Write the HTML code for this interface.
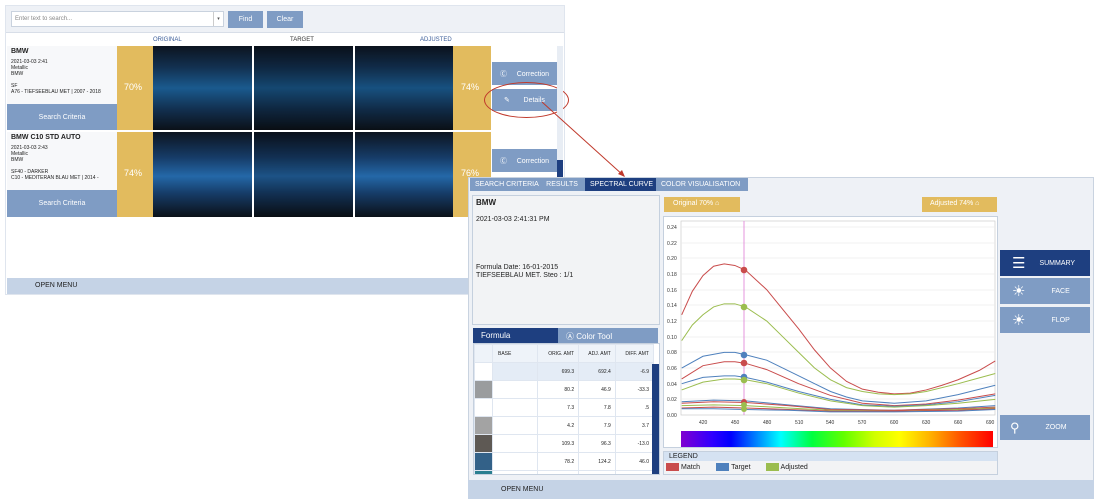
<!DOCTYPE html>
<html><head><meta charset="utf-8"><style>
*{box-sizing:border-box;margin:0;padding:0}
body{width:1094px;height:499px;background:#fff;font-family:"Liberation Sans",sans-serif;position:relative;overflow:hidden;color:#222}
.a{position:absolute;white-space:nowrap}
.btn{background:#7f9cc4;color:#fff;font-size:7px;display:flex;align-items:center;justify-content:center}
.gold{background:#e2bb5e}
.sw{background:linear-gradient(#0c1420 0%,#123050 25%,#1a5a8e 50%,#123050 75%,#0b1118 100%)}
.sw2{background:linear-gradient(#0c1420 0%,#163c68 30%,#2468a8 52%,#163c68 72%,#0b1118 100%)}
.card{background:#f7f8fa;font-size:5px;line-height:6px;padding:3px 4px}
.card b{font-size:7px;display:block;margin-bottom:4px}
td{border:1px solid #dfe6f0;font-size:5px;text-align:right;padding-right:4px;height:18px}
</style></head><body>
<div class="a" style="left:5px;top:5px;width:560px;height:290px;border:1px solid #dfe5ee;background:#fff"></div>
<div class="a" style="left:6px;top:6px;width:558px;height:27px;background:#eef1f6;border-bottom:1px solid #d8dee8"></div>
<div class="a" style="left:11px;top:11px;width:213px;height:16px;background:#fff;border:1px solid #c9d2de;font-size:6px;color:#888;padding:4px 3px">Enter text to search...</div>
<div class="a" style="left:213px;top:12px;width:10px;height:14px;border-left:1px solid #ccc;font-size:5px;color:#555;text-align:center;line-height:14px">▾</div>
<div class="a btn" style="left:228px;top:11px;width:35px;height:17px">Find</div>
<div class="a btn" style="left:267px;top:11px;width:36px;height:17px">Clear</div>
<div class="a" style="left:153px;top:37px;font-size:6px;color:#3a5c98">ORIGINAL</div>
<div class="a" style="left:290px;top:37px;font-size:6px;color:#333">TARGET</div>
<div class="a" style="left:420px;top:37px;font-size:6px;color:#3a5c98">ADJUSTED</div>
<div class="a card" style="left:7px;top:46px;width:110px;height:58px"><b>BMW</b>2021-03-03 2:41<br>Metallic<br>BMW<br><br>SF<br>A76 - TIEFSEEBLAU MET | 2007 - 2018</div>
<div class="a btn" style="left:7px;top:104px;width:110px;height:26px">Search Criteria</div>
<div class="a gold" style="left:117px;top:46px;width:36px;height:84px;color:#fff;font-size:9px;padding:36px 0 0 7px">70%</div>
<div class="a sw" style="left:153px;top:46px;width:99px;height:84px"></div>
<div class="a sw" style="left:254px;top:46px;width:99px;height:84px;filter:brightness(.8)"></div>
<div class="a sw" style="left:355px;top:46px;width:98px;height:84px;filter:brightness(.9)"></div>
<div class="a gold" style="left:453px;top:46px;width:38px;height:84px;color:#fff;font-size:9px;padding:36px 0 0 8px">74%</div>
<div class="a btn" style="left:492px;top:62px;width:65px;height:23px">Ⓒ &nbsp;&nbsp;&nbsp; Correction</div>
<div class="a btn" style="left:492px;top:89px;width:65px;height:22px">✎ &nbsp;&nbsp;&nbsp;&nbsp;&nbsp; Details</div>
<div class="a" style="left:484px;top:82px;width:85px;height:36px;border:1px solid #c0392b;border-radius:50%"></div>
<div class="a card" style="left:7px;top:132px;width:110px;height:58px"><b>BMW C10 STD AUTO</b>2021-03-03 2:43<br>Metallic<br>BMW<br><br>SF40 - DARKER<br>C10 - MEDITERAN BLAU MET | 2014 -</div>
<div class="a btn" style="left:7px;top:190px;width:110px;height:27px">Search Criteria</div>
<div class="a gold" style="left:117px;top:132px;width:36px;height:85px;color:#fff;font-size:9px;padding:36px 0 0 7px">74%</div>
<div class="a sw2" style="left:153px;top:132px;width:99px;height:85px"></div>
<div class="a sw2" style="left:254px;top:132px;width:99px;height:85px;filter:brightness(.8)"></div>
<div class="a sw2" style="left:355px;top:132px;width:98px;height:85px"></div>
<div class="a gold" style="left:453px;top:132px;width:38px;height:85px;color:#fff;font-size:9px;padding:36px 0 0 8px">76%</div>
<div class="a btn" style="left:492px;top:149px;width:65px;height:23px">Ⓒ &nbsp;&nbsp;&nbsp; Correction</div>
<div class="a" style="left:557px;top:46px;width:6px;height:171px;background:#e8edf4"></div>
<div class="a" style="left:557px;top:160px;width:6px;height:17px;background:#1e3f80"></div>
<div class="a" style="left:7px;top:278px;width:461px;height:16px;background:#c5d3e6;font-size:7px;padding:4px 0 0 28px">OPEN MENU</div>
<svg class="a" style="left:540px;top:100px" width="90" height="80"><line x1="2" y1="2" x2="84" y2="76" stroke="#c0392b" stroke-width="1"/><path d="M78 74 L85 77 L82 70Z" fill="#c0392b"/></svg>
<div class="a" style="left:468px;top:177px;width:626px;height:322px;background:#eef1f6;border:1px solid #c9d3e0"></div>
<div class="a" style="left:470px;top:178px;width:115px;height:13px;background:#7f9cc4;color:#fff;font-size:7px;padding:3px 0 0 5px">SEARCH CRITERIA &nbsp;&nbsp; RESULTS</div>
<div class="a" style="left:585px;top:178px;width:71px;height:13px;background:#1e3f80;color:#fff;font-size:7px;padding:3px 0 0 5px">SPECTRAL CURVE</div>
<div class="a" style="left:656px;top:178px;width:92px;height:13px;background:#7f9cc4;color:#fff;font-size:7px;padding:3px 0 0 5px">COLOR VISUALISATION</div>
<div class="a" style="left:472px;top:195px;width:188px;height:130px;background:#f2f3f5;border:1px solid #c5d0de;font-size:7px;padding:3px 3px;line-height:8px"><b style="font-size:8px">BMW</b><br><br>2021-03-03 2:41:31 PM<br><br><br><br><br><br>Formula Date: 16-01-2015<br>TIEFSEEBLAU MET. Steo : 1/1</div>
<div class="a" style="left:473px;top:328px;width:85px;height:15px;background:#1e3f80;color:#fff;font-size:8px;padding:3px 0 0 8px">Formula</div>
<div class="a" style="left:558px;top:328px;width:100px;height:15px;background:#7f9cc4;color:#fff;font-size:8px;padding:3px 0 0 8px">Ⓐ Color Tool</div>
<div class="a" style="left:473px;top:343px;width:187px;height:132px;background:#fff;border:1px solid #c5d0de;overflow:hidden">
<table style="border-collapse:collapse;width:180px">
<tr style="background:#eef3f9"><td style="width:18px"></td><td style="text-align:left;padding-left:5px;width:45px">BASE</td><td>ORIG. AMT</td><td>ADJ. AMT</td><td>DIFF. AMT</td></tr>
<tr style="background:#e4ecf6"><td style="background:#fff"></td><td></td><td>699.3</td><td>692.4</td><td>-6.9</td></tr>
<tr><td style="background:#9a9c9e"></td><td></td><td>80.2</td><td>46.9</td><td>-33.3</td></tr>
<tr><td></td><td></td><td>7.3</td><td>7.8</td><td>.5</td></tr>
<tr><td style="background:#a3a3a3"></td><td></td><td>4.2</td><td>7.9</td><td>3.7</td></tr>
<tr><td style="background:#5e5954"></td><td></td><td>109.3</td><td>96.3</td><td>-13.0</td></tr>
<tr><td style="background:#336188"></td><td></td><td>78.2</td><td>124.2</td><td>46.0</td></tr>
<tr><td style="background:#2a7f90"></td><td></td><td></td><td></td><td></td></tr>
</table>
<div class="a" style="left:178px;top:20px;width:7px;height:110px;background:#1e3f80"></div>
</div>
<div class="a" style="left:468px;top:480px;width:626px;height:19px;background:#c5d3e6;font-size:7px;padding:6px 0 0 33px">OPEN MENU</div>
<div class="a gold" style="left:664px;top:197px;width:76px;height:15px;color:#fff;font-size:7px;padding:3px 0 0 9px">Original 70% ⌂</div>
<div class="a gold" style="left:922px;top:197px;width:75px;height:15px;color:#fff;font-size:7px;padding:3px 0 0 8px">Adjusted 74% ⌂</div>
<div class="a" style="left:663px;top:216px;width:335px;height:232px;background:#fff;border:1px solid #c5d0de"></div>
<svg class="a" style="left:0;top:0" width="1094" height="499">
<rect x="681" y="221" width="314" height="194" fill="none" stroke="#ccc" stroke-width=".7"/>
<g stroke="#ebebeb" stroke-width=".7">
<line x1="681" x2="995" y1="399" y2="399"/><line x1="681" x2="995" y1="384" y2="384"/><line x1="681" x2="995" y1="368" y2="368"/><line x1="681" x2="995" y1="352" y2="352"/><line x1="681" x2="995" y1="337" y2="337"/><line x1="681" x2="995" y1="321" y2="321"/><line x1="681" x2="995" y1="305" y2="305"/><line x1="681" x2="995" y1="290" y2="290"/><line x1="681" x2="995" y1="274" y2="274"/><line x1="681" x2="995" y1="258" y2="258"/><line x1="681" x2="995" y1="243" y2="243"/><line x1="681" x2="995" y1="227" y2="227"/></g>
<g font-size="5" fill="#333" font-family="Liberation Sans">
<text x="667" y="417">0.00</text><text x="667" y="401">0.02</text><text x="667" y="386">0.04</text><text x="667" y="370">0.06</text><text x="667" y="354">0.08</text><text x="667" y="339">0.10</text><text x="667" y="323">0.12</text><text x="667" y="307">0.14</text><text x="667" y="292">0.16</text><text x="667" y="276">0.18</text><text x="667" y="260">0.20</text><text x="667" y="245">0.22</text><text x="667" y="229">0.24</text>
<text x="699" y="424">420</text><text x="731" y="424">450</text><text x="763" y="424">480</text><text x="795" y="424">510</text><text x="826" y="424">540</text><text x="858" y="424">570</text><text x="890" y="424">600</text><text x="922" y="424">630</text><text x="954" y="424">660</text><text x="986" y="424">690</text></g>
<line x1="744" y1="221" x2="744" y2="415" stroke="#e07ad6" stroke-width=".8"/>
<g fill="none" stroke-width="1" transform="matrix(1.063,0,0,-783,256.5,415)">
<polyline vector-effect="non-scaling-stroke" stroke="#c94c4c" points="400,.128 410,.158 420,.178 430,.19 440,.193 450,.191 460,.185 480,.16 495,.135 510,.11 525,.083 540,.06 555,.043 570,.033 585,.029 600,.027 615,.028 630,.032 645,.038 660,.045 680,.057 695,.069"/>
<polyline vector-effect="non-scaling-stroke" stroke="#9bbd4f" points="400,.095 410,.115 420,.128 430,.138 440,.142 450,.142 460,.138 480,.12 495,.1 510,.08 525,.06 540,.045 555,.035 570,.03 585,.027 600,.026 615,.027 630,.03 660,.04 695,.053"/>
<polyline vector-effect="non-scaling-stroke" stroke="#4f81bd" points="400,.06 420,.075 440,.08 450,.08 460,.077 480,.07 510,.05 525,.04 540,.03 555,.023 570,.018 600,.015 630,.018 660,.026 695,.038"/>
<polyline vector-effect="non-scaling-stroke" stroke="#c94c4c" points="400,.046 420,.063 440,.068 450,.068 460,.066 480,.058 510,.04 540,.025 570,.015 600,.012 630,.014 660,.019 695,.027"/>
<polyline vector-effect="non-scaling-stroke" stroke="#4f81bd" points="400,.04 420,.048 440,.05 450,.05 460,.048 480,.042 510,.03 540,.02 570,.013 600,.011 630,.013 660,.017 695,.025"/>
<polyline vector-effect="non-scaling-stroke" stroke="#9bbd4f" points="400,.032 420,.042 440,.046 450,.046 460,.045 480,.04 510,.028 540,.018 570,.012 600,.01 630,.012 660,.015 695,.02"/>
<polyline vector-effect="non-scaling-stroke" stroke="#4f81bd" points="400,.017 430,.019 460,.018 500,.013 540,.008 600,.006 660,.009 695,.012"/>
<polyline vector-effect="non-scaling-stroke" stroke="#c94c4c" points="400,.015 430,.017 460,.016 500,.012 540,.007 600,.006 660,.008 695,.01"/>
<polyline vector-effect="non-scaling-stroke" stroke="#9bbd4f" points="400,.012 430,.013 460,.012 500,.009 540,.006 600,.005 660,.007 695,.009"/>
<polyline vector-effect="non-scaling-stroke" stroke="#c94c4c" points="400,.009 430,.01 460,.009 500,.007 540,.005 600,.005 660,.006 695,.008"/>
<polyline vector-effect="non-scaling-stroke" stroke="#4f81bd" points="400,.008 430,.008 460,.007 500,.006 540,.004 600,.004 660,.005 695,.007"/>
</g>
<g><circle cx="744" cy="270" r="3.3" fill="#c94c4c"/><circle cx="744" cy="307" r="3.3" fill="#9bbd4f"/><circle cx="744" cy="355" r="3.3" fill="#4f81bd"/><circle cx="744" cy="363" r="3.3" fill="#c94c4c"/><circle cx="744" cy="377" r="3.3" fill="#4f81bd"/><circle cx="744" cy="380" r="3.3" fill="#9bbd4f"/><circle cx="744" cy="402" r="3" fill="#c94c4c"/><circle cx="744" cy="405" r="3" fill="#9bbd4f"/><circle cx="744" cy="409" r="3" fill="#9bbd4f"/></g>
</svg>
<div class="a" style="left:681px;top:431px;width:312px;height:16px;background:linear-gradient(90deg,#8000d0 0%,#3000ff 10%,#0000ff 16%,#00a0ff 26%,#00ffff 32%,#00ff40 42%,#60ff00 52%,#d0ff00 62%,#ffff00 70%,#ffb000 80%,#ff5000 90%,#ff0000 100%)"></div>
<div class="a" style="left:663px;top:451px;width:335px;height:24px;background:#f2f3f5;border:1px solid #c5d0de"></div>
<div class="a" style="left:664px;top:452px;width:333px;height:9px;background:#d5e2f2;font-size:7px;padding:1px 0 0 5px">LEGEND</div>
<div class="a" style="left:666px;top:463px;font-size:7px;display:flex;align-items:center;gap:2px"><span style="width:13px;height:8px;background:#c94c4c;display:inline-block"></span>Match<span style="width:13px;height:8px;background:#4f81bd;display:inline-block;margin-left:14px"></span>Target<span style="width:13px;height:8px;background:#9bbd4f;display:inline-block;margin-left:13px"></span>Adjusted</div>
<div class="a btn" style="left:1000px;top:250px;width:90px;height:26px;background:#1e3f80;justify-content:flex-start;padding-left:12px;font-size:7px"><span style="font-size:15px;margin-right:14px">☰</span>SUMMARY</div>
<div class="a btn" style="left:1000px;top:278px;width:90px;height:26px;justify-content:flex-start;padding-left:12px"><span style="font-size:15px;margin-right:26px">☀</span>FACE</div>
<div class="a btn" style="left:1000px;top:307px;width:90px;height:26px;justify-content:flex-start;padding-left:12px"><span style="font-size:15px;margin-right:26px">☀</span>FLOP</div>
<div class="a btn" style="left:1000px;top:415px;width:90px;height:25px;justify-content:flex-start;padding-left:10px"><span style="font-size:13px;margin-right:26px">⚲</span>ZOOM</div>
</body></html>
